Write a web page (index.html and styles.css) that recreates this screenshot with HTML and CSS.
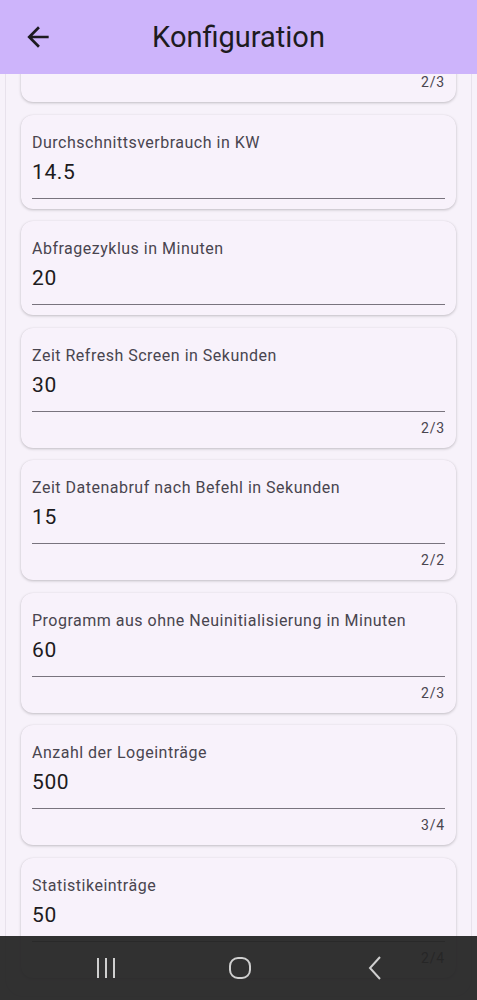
FILE: index.html
```html
<!DOCTYPE html>
<html lang="de">
<head>
  <meta charset="UTF-8">
  <title>Konfiguration</title>
  <link rel="stylesheet" href="styles.css">
</head>
<body>

<header class="app-bar">
  <button class="back-btn" aria-label="Zurück">
    <svg viewBox="0 0 24 24" width="32" height="32"><path d="M20 11H7.83l5.59-5.59L12 4l-8 8 8 8 1.41-1.41L7.83 13H20v-2z" fill="currentColor"/></svg>
  </button>
  <h1 class="title">Konfiguration</h1>
</header>

<div class="viewport">
  <div class="panel">
    <ul class="fields">
      <li class="card">
        <label class="field-label">Ladeleistung in KW</label>
        <div class="field-value">11</div>
        <div class="counter">2/3</div>
      </li>
      <li class="card">
        <label class="field-label">Durchschnittsverbrauch in KW</label>
        <div class="field-value">14.5</div>
      </li>
      <li class="card">
        <label class="field-label">Abfragezyklus in Minuten</label>
        <div class="field-value">20</div>
      </li>
      <li class="card">
        <label class="field-label">Zeit Refresh Screen in Sekunden</label>
        <div class="field-value">30</div>
        <div class="counter">2/3</div>
      </li>
      <li class="card">
        <label class="field-label">Zeit Datenabruf nach Befehl in Sekunden</label>
        <div class="field-value">15</div>
        <div class="counter">2/2</div>
      </li>
      <li class="card">
        <label class="field-label">Programm aus ohne Neuinitialisierung in Minuten</label>
        <div class="field-value">60</div>
        <div class="counter">2/3</div>
      </li>
      <li class="card">
        <label class="field-label">Anzahl der Logeinträge</label>
        <div class="field-value">500</div>
        <div class="counter">3/4</div>
      </li>
      <li class="card">
        <label class="field-label">Statistikeinträge</label>
        <div class="field-value">50</div>
        <div class="counter">2/4</div>
      </li>
    </ul>
  </div>
</div>

<nav class="sys-nav">
  <span class="sys-btn">
    <svg viewBox="0 0 24 24" width="24" height="24"><path d="M4 2v20M12 2v20M20 2v20" stroke="currentColor" stroke-width="2" fill="none"/></svg>
  </span>
  <span class="sys-btn">
    <svg viewBox="0 0 24 24" width="24" height="24"><rect x="2" y="2" width="20" height="20" rx="8" stroke="currentColor" stroke-width="2" fill="none"/></svg>
  </span>
  <span class="sys-btn">
    <svg viewBox="0 0 24 24" width="24" height="24"><path d="M18 1L8 12l10 11" stroke="currentColor" stroke-width="2" fill="none"/></svg>
  </span>
</nav>

</body>
</html>
```

FILE: styles.css
```css
body {
  margin: 0;
  width: 477px;
  height: 1000px;
  overflow: hidden;
  background: #f7f2fa;
  font-family: Roboto, "Noto Sans", sans-serif;
  color: #1d1b20;
}

.app-bar {
  position: relative;
  z-index: 2;
  height: 74px;
  background: #cdb4fb;
  display: flex;
  align-items: center;
}
.back-btn {
  width: 32px;
  height: 32px;
  margin-left: 22px;
  padding: 0;
  border: none;
  background: none;
  color: #1d1b20;
  display: flex;
}
.title {
  flex: 1;
  margin: 0;
  padding-right: 54px;
  text-align: center;
  font-size: 29px;
  font-weight: 400;
  line-height: 36px;
}

.viewport {
  height: 926px;
}
.panel {
  margin: 0 5px;
  height: 1014px;
  margin-top: -92px;
  border-left: 1px solid #e8e2ec;
  border-right: 1px solid #e8e2ec;
  border-bottom: 1px solid #e8e2ec;
  border-radius: 0 0 18px 18px;
}
.fields {
  list-style: none;
  margin: 0;
  padding: 0 15px;
  display: flex;
  flex-direction: column;
  gap: 12.5px;
}
.card {
  background: #f8f2fb;
  border-radius: 12px;
  box-shadow: 0 1px 3px rgba(0, 0, 0, 0.22), 0 0 1px rgba(0, 0, 0, 0.08);
  padding: 18px 11px 10px;
}
.field-label {
  display: block;
  font-size: 16px;
  line-height: 20px;
  letter-spacing: 0.5px;
  color: #49454f;
}
.field-value {
  margin-top: 6px;
  padding-bottom: 13px;
  border-bottom: 1px solid #79747e;
  font-size: 21px;
  line-height: 26px;
  letter-spacing: 0.6px;
}
.counter {
  margin-top: 7px;
  text-align: right;
  font-size: 14px;
  line-height: 19px;
  letter-spacing: 0.8px;
  color: #49454f;
}

.sys-nav {
  position: fixed;
  left: 0;
  bottom: 0;
  width: 477px;
  height: 64px;
  background: rgba(36, 36, 36, 0.94);
  display: grid;
  grid-template-columns: repeat(3, 134px);
  justify-content: center;
  padding-left: 3px;
  box-sizing: border-box;
  align-items: center;
}
.sys-btn {
  display: flex;
  justify-content: center;
  color: #cfcfcf;
}
```
